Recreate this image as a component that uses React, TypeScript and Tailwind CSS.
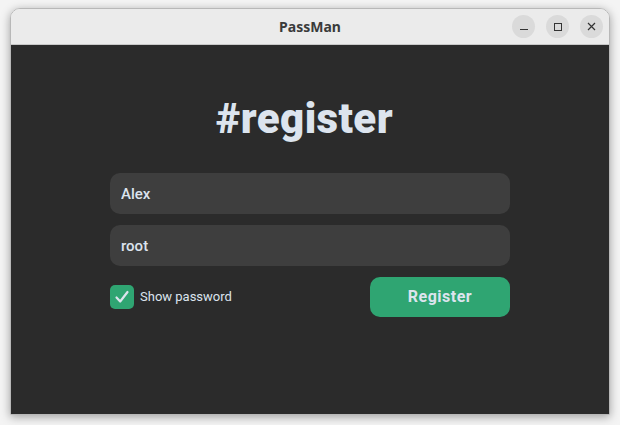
import { useState } from "react";

export default function App() {
  const [name, setName] = useState("Alex");
  const [password, setPassword] = useState("root");
  const [show, setShow] = useState(true);

  return (
    <div className="w-[620px] h-[425px] bg-[#f4f4f4] pt-2 px-[10px] pb-[10px]">
      <div className="h-full flex flex-col rounded-t-[10px] overflow-hidden border border-[#b8b8b8] shadow-[0_2px_10px_rgba(0,0,0,0.35)]">
        {/* titlebar */}
        <div className="h-[36px] shrink-0 bg-[#ebebeb] border-b border-[#c8c8c8] flex items-center relative">
          <div className="flex-1 text-center text-[14px] font-bold text-[#3a3a3a] font-['Noto_Sans',sans-serif]">
            PassMan
          </div>
          <div className="absolute right-[6px] top-[6px] flex gap-[11px]">
            <div className="w-[23px] h-[23px] rounded-full bg-[#dadada] flex items-center justify-center">
              <div className="w-[8px] h-[1px] bg-[#333] mt-[5px]" />
            </div>
            <div className="w-[23px] h-[23px] rounded-full bg-[#dadada] flex items-center justify-center">
              <div className="w-[8px] h-[8px] border border-[#333]" />
            </div>
            <div className="w-[23px] h-[23px] rounded-full bg-[#dadada] flex items-center justify-center">
              <svg width="9" height="9" viewBox="0 0 9 9">
                <path d="M1 1L8 8M8 1L1 8" stroke="#333" strokeWidth="1.2" />
              </svg>
            </div>
          </div>
        </div>

        {/* content */}
        <div className="flex-1 bg-[#2b2b2b] flex flex-col items-center font-['Roboto',sans-serif] text-[#dce4ee]">
          <h1 className="mt-[48px] mr-[11px] text-[42px] leading-[52px] font-black tracking-[0.4px]">#register</h1>
          <div className="w-[400px] mt-[28px] flex flex-col gap-[11px]">
            <input
              value={name}
              onChange={e => setName(e.target.value)}
              className="h-[41px] w-full rounded-[10px] bg-[#3e3e3e] px-[11px] text-[15px] font-medium outline-none"
            />
            <input
              type={show ? "text" : "password"}
              value={password}
              onChange={e => setPassword(e.target.value)}
              className="h-[41px] w-full rounded-[10px] bg-[#3e3e3e] px-[11px] text-[15px] font-medium outline-none"
            />
            <div className="flex items-center justify-between">
              <label className="flex items-center gap-[6px] cursor-pointer" onClick={() => setShow(s => !s)}>
                <div className="w-[24px] h-[24px] rounded-[5px] bg-[#2fa572] flex items-center justify-center">
                  {show && (
                    <svg width="16" height="16" viewBox="0 0 16 16">
                      <path d="M2.5 8.5L6.2 12.5L13.5 3" fill="none" stroke="#dce4ee" strokeWidth="2.2" strokeLinecap="round" strokeLinejoin="round" />
                    </svg>
                  )}
                </div>
                <span className="text-[13px]">Show password</span>
              </label>
              <button className="w-[140px] h-[40px] rounded-[10px] bg-[#2fa572] text-[16px] font-bold tracking-[0.5px]">
                Register
              </button>
            </div>
          </div>
        </div>
      </div>
    </div>
  );
}
